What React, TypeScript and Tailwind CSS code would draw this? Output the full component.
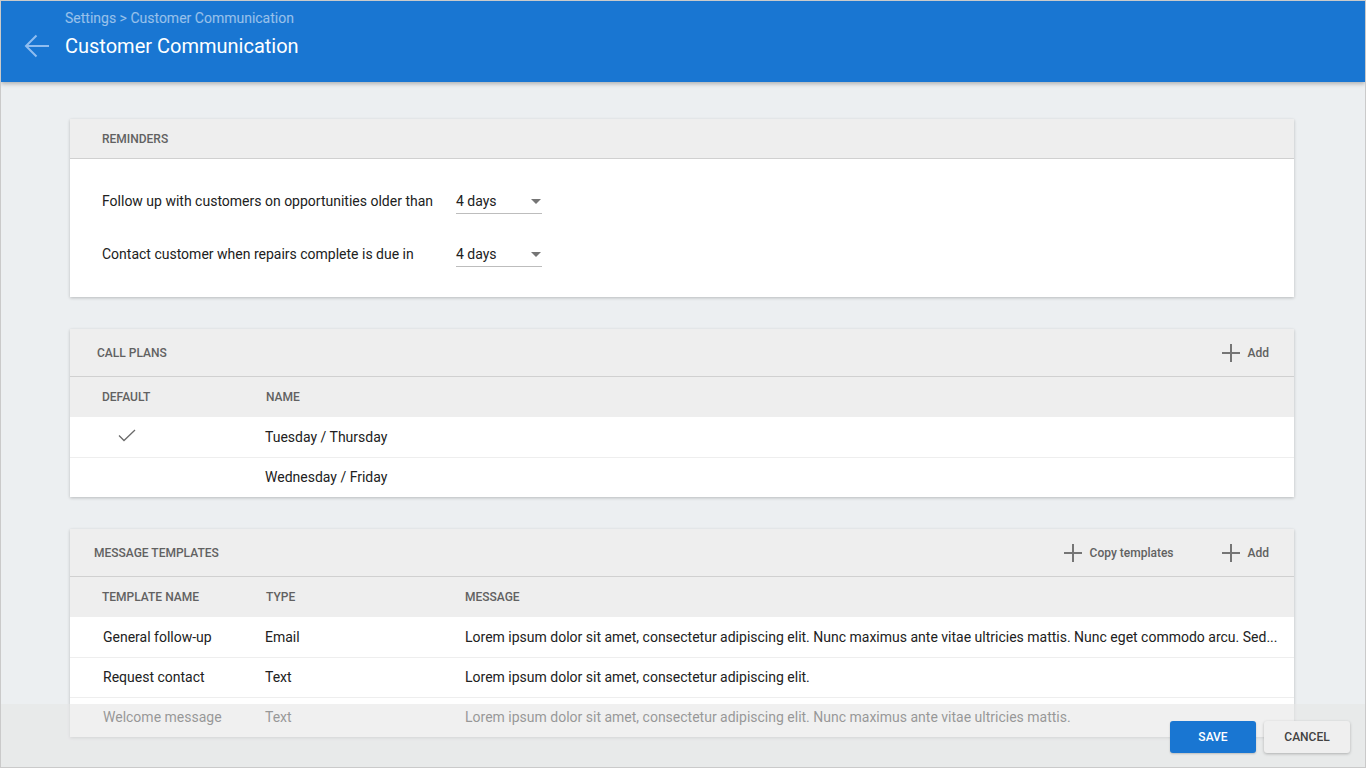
const LOREM_LONG =
  "Lorem ipsum dolor sit amet, consectetur adipiscing elit. Nunc maximus ante vitae ultricies mattis. Nunc eget commodo arcu. Sed...";

function PlusIcon() {
  return (
    <svg width="18" height="18" viewBox="0 0 18 18" className="shrink-0">
      <path d="M9 0v18M0 9h18" stroke="#757575" strokeWidth="2" fill="none" />
    </svg>
  );
}

function HeaderAction({ label }: { label: string }) {
  return (
    <button className="flex items-center gap-2 text-[12px] font-medium text-[#616161]">
      <PlusIcon />
      <span>{label}</span>
    </button>
  );
}

function Select({ value }: { value: string }) {
  return (
    <div className="mt-[1px] flex h-[24px] w-[86px] items-center justify-between border-b border-[#bdbdbd] text-[14px] text-[#212121]">
      <span>{value}</span>
      <svg width="10" height="5" viewBox="0 0 10 5" className="mr-[1px]">
        <path d="M0 0h10L5 5z" fill="#757575" />
      </svg>
    </div>
  );
}

function Card({ children }: { children: React.ReactNode }) {
  return (
    <div className="ml-[69px] w-[1224px] bg-white shadow-[0_1px_3px_rgba(0,0,0,0.22)]">
      {children}
    </div>
  );
}

const colHead = "text-[12px] font-medium uppercase text-[#616161]";

export default function App() {
  return (
    <div
      className="relative h-[768px] w-[1366px] overflow-hidden border border-[#cacaca] bg-[#eceff1]"
      style={{ fontFamily: "Roboto, 'Noto Sans', sans-serif" }}
    >
      {/* top bar */}
      <header className="relative z-10 flex h-[81px] bg-[#1976d2] shadow-[0_2px_4px_rgba(0,0,0,0.25)]">
        <div className="pl-[22px] pt-[32px]">
          <svg width="28" height="26" viewBox="0 0 28 26">
            <path
              d="M26 13H3M13.5 2.5L3 13l10.5 10.5"
              stroke="#8fbdf0"
              strokeWidth="2"
              fill="none"
            />
          </svg>
        </div>
        <div className="pl-[14px] pt-[8px]">
          <div className="text-[14px] leading-[18px] text-white/55">
            Settings &gt; Customer Communication
          </div>
          <h1 className="mt-[5px] text-[20px] leading-[28px] text-white">
            Customer Communication
          </h1>
        </div>
      </header>

      <main className="flex flex-col gap-[32px] pt-[37px]">
        {/* reminders */}
        <Card>
          <div className="flex h-[40px] items-center border-b border-[#d0d0d0] bg-[#eeeeee] pl-[32px]">
            <span className={colHead}>Reminders</span>
          </div>
          <div className="flex flex-col gap-[21px] pb-[27px] pl-[32px] pt-[26px] text-[14px] text-[#212121]">
            <div className="flex h-[32px] items-center">
              <span className="w-[354px]">Follow up with customers on opportunities older than</span>
              <Select value="4 days" />
            </div>
            <div className="flex h-[32px] items-center">
              <span className="w-[354px]">Contact customer when repairs complete is due in</span>
              <Select value="4 days" />
            </div>
          </div>
        </Card>

        {/* call plans */}
        <Card>
          <div className="flex h-[48px] items-center justify-between border-b border-[#d0d0d0] bg-[#eeeeee] pl-[27px] pr-[25px]">
            <span className={colHead}>Call Plans</span>
            <HeaderAction label="Add" />
          </div>
          <div className="grid h-[40px] grid-cols-[164px_1fr] items-center bg-[#eeeeee] pl-[32px]">
            <span className={colHead}>Default</span>
            <span className={colHead}>Name</span>
          </div>
          <div className="grid h-[40px] grid-cols-[164px_1fr] items-center pl-[32px] text-[14px] text-[#212121]">
            <span className="pl-[16px] pb-[3px]">
              <svg width="18" height="13" viewBox="0 0 18 13">
                <path d="M1 6.5l5 5L17 1" stroke="#6b6b6b" strokeWidth="1.3" fill="none" />
              </svg>
            </span>
            <span className="-ml-px">Tuesday / Thursday</span>
          </div>
          <div className="grid h-[40px] grid-cols-[164px_1fr] items-center border-t border-[#eeeeee] pl-[32px] text-[14px] text-[#212121]">
            <span />
            <span className="-ml-px">Wednesday / Friday</span>
          </div>
        </Card>

        {/* message templates */}
        <Card>
          <div className="flex h-[48px] items-center justify-between border-b border-[#d0d0d0] bg-[#eeeeee] pl-[24px] pr-[25px]">
            <span className={colHead}>Message Templates</span>
            <div className="flex items-center gap-[48px]">
              <HeaderAction label="Copy templates" />
              <HeaderAction label="Add" />
            </div>
          </div>
          <div className="grid h-[40px] grid-cols-[164px_199px_1fr] items-center bg-[#eeeeee] pl-[32px] pr-[14px]">
            <span className={colHead}>Template Name</span>
            <span className={colHead}>Type</span>
            <span className={colHead}>Message</span>
          </div>
          {[
            { name: "General follow-up", type: "Email", msg: LOREM_LONG },
            { name: "Request contact", type: "Text", msg: "Lorem ipsum dolor sit amet, consectetur adipiscing elit." },
            {
              name: "Welcome message",
              type: "Text",
              msg: "Lorem ipsum dolor sit amet, consectetur adipiscing elit. Nunc maximus ante vitae ultricies mattis.",
            },
          ].map((row, i) => (
            <div
              key={row.name}
              className={`grid h-[40px] grid-cols-[164px_199px_minmax(0,1fr)] items-center pl-[32px] pr-[10px] text-[14px] text-[#212121] ${
                i > 0 ? "border-t border-[#eeeeee]" : ""
              }`}
            >
              <span className="pl-px">{row.name}</span>
              <span className="-ml-px">{row.type}</span>
              <span className="whitespace-nowrap">{row.msg}</span>
            </div>
          ))}
        </Card>
      </main>

      {/* action bar over the content */}
      <div className="absolute bottom-0 left-0 right-0 z-20 flex h-[63px] items-start justify-end gap-[8px] bg-[#e6e6e6]/60 pr-[15px] pt-[17px]">
        <button className="h-[32px] w-[86px] rounded-[3px] bg-[#1976d2] text-[12px] font-medium text-white shadow-[0_1px_2px_rgba(0,0,0,0.2)]">
          SAVE
        </button>
        <button className="h-[32px] w-[86px] rounded-[3px] bg-[#efefef] text-[12px] font-medium text-[#424242] shadow-[0_1px_3px_rgba(0,0,0,0.25)]">
          CANCEL
        </button>
      </div>
    </div>
  );
}
